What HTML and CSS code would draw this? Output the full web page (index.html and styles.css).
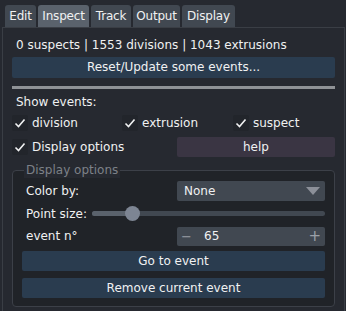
FILE: index.html
```html
<!DOCTYPE html>
<html>
<head>
<meta charset="utf-8">
<link rel="stylesheet" href="styles.css">
</head>
<body>
<div class="root">
  <div class="tabs">
    <div class="tab t-edit">Edit</div>
    <div class="tab t-inspect active">Inspect</div>
    <div class="tab t-track">Track</div>
    <div class="tab t-output">Output</div>
    <div class="tab t-display">Display</div>
  </div>
  <div class="panel">
    <div class="stats">0 suspects | 1553 divisions | 1043 extrusions</div>
    <div class="btn blue wide">Reset/Update some events...</div>
    <div class="sep"></div>
    <div class="label-row">Show events:</div>
    <div class="check-row">
      <div class="check c1"><span class="box"><svg viewBox="0 0 16 16" width="16" height="16"><path d="M3.5 8.5 L6.5 11.5 L12.5 4.5" fill="none" stroke="#f0f1f2" stroke-width="1.6"/></svg></span>division</div>
      <div class="check c2"><span class="box"><svg viewBox="0 0 16 16" width="16" height="16"><path d="M3.5 8.5 L6.5 11.5 L12.5 4.5" fill="none" stroke="#f0f1f2" stroke-width="1.6"/></svg></span>extrusion</div>
      <div class="check c3"><span class="box"><svg viewBox="0 0 16 16" width="16" height="16"><path d="M3.5 8.5 L6.5 11.5 L12.5 4.5" fill="none" stroke="#f0f1f2" stroke-width="1.6"/></svg></span>suspect</div>
    </div>
    <div class="opt-row">
      <div class="check c1"><span class="box"><svg viewBox="0 0 16 16" width="16" height="16"><path d="M3.5 8.5 L6.5 11.5 L12.5 4.5" fill="none" stroke="#f0f1f2" stroke-width="1.6"/></svg></span>Display options</div>
      <div class="btn purple help">help</div>
    </div>
    <div class="group">
      <div class="group-title">Display options</div>
      <div class="form-row">
        <div class="flabel">Color by:</div>
        <div class="combo"><span>None</span><svg width="14" height="8" viewBox="0 0 14 8"><path d="M0 0 H14 L7 8 Z" fill="#8c9099"/></svg></div>
      </div>
      <div class="slider-row">
        <div class="flabel">Point size:</div>
        <div class="slider"><div class="fill"></div><div class="handle"></div></div>
      </div>
      <div class="form-row">
        <div class="flabel">event n°</div>
        <div class="spin"><span class="minus">−</span><span class="val">65</span><span class="plus">+</span></div>
      </div>
      <div class="btn blue inner first">Go to event</div>
      <div class="btn blue inner">Remove current event</div>
    </div>
  </div>
</div>
</body>
</html>
```
FILE: styles.css
```css
* { box-sizing: border-box; }
html, body { margin: 0; padding: 0; }
body {
  width: 346px; height: 311px;
  background: #262930;
  font-family: "DejaVu Sans", sans-serif;
  font-size: 12px;
  color: #f0f1f2;
  overflow: hidden;
}
.root { padding: 5px 1px 0 2px; }
.tabs { display: flex; gap: 2px; padding-left: 3px; height: 22px; }
.tab {
  background: #414851;
  border-radius: 3px 3px 0 0;
  text-align: center;
  line-height: 22px;
  height: 22px;
  letter-spacing: -0.2px;
}
.t-edit { width: 31px; }
.t-inspect { width: 51px; }
.t-track { width: 40px; }
.t-output { width: 47px; }
.t-display { width: 53px; }
.tab.active { background: #5a626c; }
.panel {
  border: 1px solid #3a3e45;
  border-bottom: none;
  height: 290px;
  padding: 9px 9px 0 9px;
}
.stats { padding-left: 4px; height: 20px; line-height: 17px; }
.btn {
  border-radius: 2px;
  text-align: center;
  height: 21px;
  line-height: 21px;
}
.blue { background: #2a3c4f; }
.purple { background: #3a3543; }
.sep { height: 3px; background: #8f9296; margin: 8px 0 0 0; }
.label-row { padding-left: 4px; height: 20px; line-height: 18px; margin-top: 4px; }
.check-row, .opt-row { display: flex; align-items: center; height: 22px; }
.check-row { margin-top: -1px; }
.opt-row { height: 22px; margin-top: 2px; }
.check { display: flex; align-items: center; }
.box {
  width: 16px; height: 16px;
  background: #22252b;
  border-radius: 2px;
  margin-right: 4px;
  display: inline-flex;
}
.c1 { width: 110px; }
.c2 { width: 111px; }
.c3 { flex: 1; }
.opt-row .c1 { width: 165px; }
.help { flex: 1; height: 20px; line-height: 20px; }
.group {
  position: relative;
  margin-top: 12px;
  border: 1px solid #3c4048;
  border-radius: 4px;
  background: #202328;
  padding: 10px 9px 7px 9px;
  height: 137px;
}
.group-title {
  position: absolute;
  top: -9px; left: 11px;
  background: #262930;
  color: #7d8188;
  padding: 0 2px;
  line-height: 16px;
}
.form-row { display: flex; align-items: center; height: 20px; }
.flabel { width: 155px; padding-left: 4px; }
.combo {
  flex: 1; height: 20px;
  background: #414851;
  border-radius: 2px;
  display: flex; align-items: center; justify-content: space-between;
  padding: 0 5px 0 7px;
}
.slider-row { display: flex; align-items: center; height: 25px; }
.slider-row .flabel { width: 70px; }
.slider {
  position: relative;
  flex: 1; height: 5px;
  background: #414851;
  border-radius: 3px;
}
.slider .fill { width: 40px; height: 5px; background: #5a626c; border-radius: 3px; }
.handle {
  position: absolute; left: 33px; top: -5px;
  width: 15px; height: 15px; border-radius: 50%;
  background: #7d8593;
}
.spin {
  flex: 1; height: 19px;
  background: #414851;
  border-radius: 2px;
  display: flex; align-items: center;
  padding: 0 4px;
}
.spin .minus { width: 23px; color: #9ba0a8; font-size: 13px; }
.spin .val { flex: 1; }
.spin .plus { color: #9ba0a8; font-size: 15px; }
.inner { margin-top: 7px; height: 20px; line-height: 20px; }
.inner.first { margin-top: 5px; }
```
